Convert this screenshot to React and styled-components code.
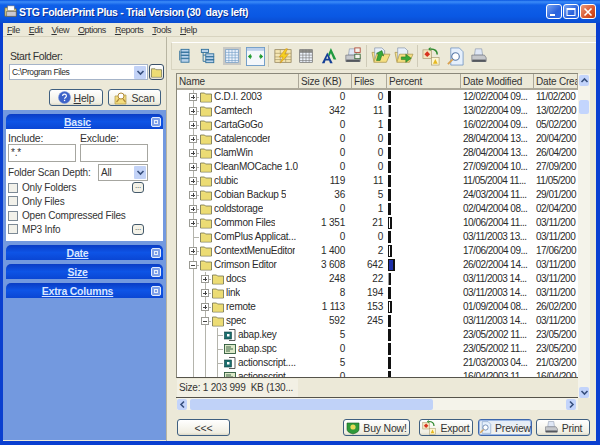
import React from 'react'
import styled, { createGlobalStyle } from 'styled-components'

const FONT = '"Liberation Sans", Arial, sans-serif'

const GlobalStyle = createGlobalStyle`
  html, body {
    margin: 0;
    padding: 0;
    background: #0a3bc8;
  }
  * {
    box-sizing: border-box;
  }
`

// Window frame ---------------------------------------------------
const Win = styled.div`
  width: 600px;
  height: 445px;
  display: flex;
  flex-direction: column;
  overflow: hidden;
  font-family: ${FONT};
  font-size: 10px;
  letter-spacing: -0.2px;
  color: #2a2a2a;
  background: #0a3fd0;
`
const TitleBar = styled.div`
  height: 23px;
  flex: none;
  display: flex;
  align-items: center;
  padding: 0 4px 0 3px;
  background: linear-gradient(180deg, #0a56e0 0%, #3c8cf8 8%, #0f5fe8 22%, #0a58e4 70%, #0a4cd0 100%);
`
const TitleText = styled.div`
  flex: 1;
  margin-left: 1px;
  color: #fff;
  font-size: 10.5px;
  font-weight: 700;
  letter-spacing: -0.35px;
  white-space: pre;
  text-shadow: 1px 1px 0 #0a2f90;
`
const TitleBtn = styled.div`
  width: 16px;
  height: 15px;
  margin-left: 1px;
  border: 1px solid #fff;
  border-radius: 3px;
  display: flex;
  align-items: center;
  justify-content: center;
  background: ${(p) =>
    p.$close
      ? 'linear-gradient(135deg, #eb9a7c, #d9542a 60%, #c23a10)'
      : 'linear-gradient(135deg, #7aa4f0, #2a62dc 60%, #2f6ae6)'};
`
const Frame = styled.div`
  flex: 1;
  min-height: 0;
  margin: 0 4px 4px 3px;
  display: flex;
  flex-direction: column;
  background: #ece9d8;
`
const MenuBar = styled.div`
  height: 14px;
  flex: none;
  display: flex;
  align-items: center;
  gap: 9px;
  padding: 0 4px;
  font-size: 9px;
  letter-spacing: -0.45px;
  color: #333;
  border-bottom: 1px solid #d8d4c0;
`
const Hotkey = styled.span`
  display: inline-block;
  &::first-letter {
    text-decoration: underline;
  }
`
const Main = styled.div`
  flex: 1;
  min-height: 0;
  display: flex;
`

// Left side ------------------------------------------------------
const LeftSide = styled.div`
  width: 164px;
  flex: none;
  display: flex;
  flex-direction: column;
  border-right: 1px solid #b8b5a2;
`
const StartArea = styled.div`
  height: 73px;
  flex: none;
  padding: 12px 2px 0 6px;
`
const StartLabel = styled.div`
  height: 15px;
  margin-left: 1px;
  line-height: 14px;
  font-size: 10.5px;
  letter-spacing: -0.4px;
  color: #333;
`
const FieldLabel = styled.div`
  height: 12px;
  line-height: 12px;
  font-size: 10.5px;
  color: #333;
`
const ComboRow = styled.div`
  display: flex;
  gap: 1px;
  height: 16px;
`
const Combo = styled.div`
  width: 141px;
  display: flex;
  align-items: center;
  justify-content: space-between;
  padding: 0 1px 0 2px;
  background: #fff;
  border: 1px solid #a6b4c8;
  font-size: 8.5px;
  letter-spacing: -0.4px;
`
const DropBtn = styled.div`
  width: 12px;
  height: 13px;
  border-radius: 1px;
  display: flex;
  align-items: center;
  justify-content: center;
  background: #c3d3f7;
`
const IconBtn = styled.div`
  width: 15px;
  height: 16px;
  border: 1px solid #39506a;
  border-radius: 3px;
  display: flex;
  align-items: center;
  justify-content: center;
  background: linear-gradient(180deg, #fff, #e8e4d4);
`
const ActionRow = styled.div`
  display: flex;
  gap: 5px;
  margin: 9px 0 0 40px;
`
const PushBtn = styled.div`
  width: ${(p) => p.$w}px;
  height: 17px;
  margin-left: ${(p) => p.$ml || 0}px;
  border: 1px solid ${(p) => (p.$active ? '#3d67ab' : '#3f5f80')};
  border-radius: 3px;
  display: flex;
  align-items: center;
  justify-content: center;
  gap: 3px;
  font-size: 10.5px;
  color: #333;
  white-space: nowrap;
  background: ${(p) =>
    p.$active ? 'linear-gradient(180deg, #e4ecf8, #f4f4ee)' : 'linear-gradient(180deg, #fff, #f0eee2 85%, #dcd8c6)'};
  box-shadow: ${(p) => (p.$active ? 'inset 0 0 0 1px #9db8e4' : 'none')};
`
const PanelStack = styled.div`
  flex: 1;
  padding: 4px 3px 0;
  margin-bottom: 1px;
  background: #7399df;
`
const GroupHead = styled.div`
  height: 15px;
  margin-top: ${(p) => (p.$first ? 0 : 4)}px;
  position: relative;
  border-radius: 5px 5px 0 0;
  display: flex;
  align-items: center;
  justify-content: center;
  padding-right: 14px;
  background: linear-gradient(180deg, #0a3cc4, #0e54e6 50%, #0a46d4);
  color: #d8e6ff;
  font-size: 10.5px;
  font-weight: 700;
  text-decoration: underline;
`
const Collapse = styled.span`
  position: absolute;
  right: 2px;
  top: 3px;
  width: 10px;
  height: 10px;
  border: 1px solid #e4ecfc;
  border-radius: 2px;
  background: #7d9fe8;
  &::after {
    content: '';
    position: absolute;
    left: 2px;
    right: 2px;
    top: 2px;
    bottom: 2px;
    border: 1px solid #e8effc;
  }
`
const GroupBody = styled.div`
  height: 112px;
  padding: 3px 3px 0 2px;
  background: #fff;
  font-size: 10px;
  color: #333;
`
const TwoFields = styled.div`
  display: grid;
  grid-template-columns: 68px 68px;
  column-gap: 4px;
`
const TextBox = styled.div`
  height: 18px;
  padding: 1px 2px;
  border: 1px solid #a6a6a0;
  font-size: 10px;
  line-height: 13px;
`
const DepthRow = styled.div`
  display: flex;
  align-items: center;
  justify-content: space-between;
  width: 140px;
  height: 18px;
  margin-top: 1px;
  white-space: nowrap;
`
const Select = styled.div`
  width: 50px;
  height: 17px;
  display: flex;
  align-items: center;
  justify-content: space-between;
  padding: 0 1px 0 2px;
  border: 1px solid #a6a6a0;
`
const CheckRow = styled.div`
  display: flex;
  align-items: center;
  gap: 4px;
  height: 13.5px;
  margin-top: ${(p) => p.$top || 0}px;
  position: relative;
  width: 136px;
  white-space: nowrap;
`
const CheckBox = styled.span`
  width: 10px;
  height: 10px;
  flex: none;
  border: 1px solid #7d8a96;
  background: #f2f1ea;
`
const Ellipsis = styled.span`
  position: absolute;
  right: 0;
  top: 1px;
  width: 12px;
  height: 11px;
  border: 1px solid #445a6c;
  border-radius: 3px;
  background: #f4f2e8;
  font-size: 8px;
  line-height: 5px;
  text-align: center;
`

// Right side -----------------------------------------------------
const Splitter = styled.div`
  width: 4px;
  flex: none;
`
const RightSide = styled.div`
  flex: 1;
  min-width: 0;
  display: flex;
  flex-direction: column;
  padding-top: 5px;
`
const Toolbar = styled.div`
  height: 28px;
  flex: none;
  display: flex;
  align-items: center;
  padding-left: 1px;
  border-top: 1px solid #fff;
  border-bottom: 1px solid #d8d4c0;
  border-left: 1px solid #d8d4c0;
`
const Tool = styled.span`
  width: 23.5px;
  height: 22px;
  flex: none;
  display: flex;
  align-items: center;
  justify-content: center;
`
const ToolSep = styled.span`
  width: 1px;
  height: 22px;
  margin: 0 2px 0 1px;
  flex: none;
  background: #cfcbb8;
`
const TableArea = styled.div`
  height: 337px;
  flex: none;
  margin: 3px 6px 0 5px;
  display: flex;
`
const TableCol = styled.div`
  width: 402px;
  flex: none;
  display: flex;
  flex-direction: column;
`
const List = styled.div`
  height: 305px;
  flex: none;
  overflow: hidden;
  background: #fff;
  border-top: 1px solid #8a887a;
  border-left: 1px solid #8a887a;
  border-bottom: 1px solid #55534a;
`
const Columns = styled.div`
  display: grid;
  grid-template-columns: 122px 53px 35px 74px 73px 44px;
  height: ${(p) => (p.$head ? 16 : 14)}px;
  line-height: ${(p) => (p.$head ? 15 : 14)}px;
  ${(p) => (p.$head ? 'background: #ece9d8; border-bottom: 2px solid #aca899;' : '')}
  white-space: nowrap;
`
const HeadCell = styled.div`
  padding-left: 2px;
  overflow: hidden;
  border-right: 1px solid #aca899;
  font-size: 10px;
  color: #333;
`
const NameCell = styled.div`
  display: flex;
  align-items: stretch;
  padding-left: 10px;
  overflow: hidden;
  letter-spacing: -0.25px;
`
const NumCell = styled.div`
  text-align: right;
  padding-right: ${(p) => p.$pad}px;
`
const TextCell = styled.div`
  padding-left: 2px;
  overflow: hidden;
  font-size: 10px;
  letter-spacing: -0.5px;
`
const PercentCell = styled.div`
  padding: 1px 0 1px 1px;
  display: flex;
`
const Guide = styled.span`
  width: 12px;
  flex: none;
  background: linear-gradient(#b4b4ac, #b4b4ac) 5.5px 0 / 1px 100% no-repeat;
`
const Branch = styled.span`
  width: 12px;
  flex: none;
  position: relative;
  background:
    linear-gradient(#b4b4ac, #b4b4ac) 5.5px 0 / 1px 100% no-repeat,
    linear-gradient(#b4b4ac, #b4b4ac) 6px 7px / 7px 1px no-repeat;
`
const Expander = styled.span`
  position: absolute;
  left: 2px;
  top: 3px;
  width: 8px;
  height: 8px;
  border: 1px solid #9a9a94;
  background: #fff;
  &::before {
    content: '';
    position: absolute;
    left: 1px;
    right: 1px;
    top: 2.5px;
    height: 1px;
    background: #444;
  }
  ${(p) =>
    p.$open
      ? ''
      : `&::after {
    content: '';
    position: absolute;
    top: 1px;
    bottom: 1px;
    left: 2.5px;
    width: 1px;
    background: #444;
  }`}
`
const NodeIcon = styled.span`
  width: 12px;
  margin: 0 2px 0 1px;
  flex: none;
  display: flex;
  align-items: center;
`
const NodeName = styled.span`
  overflow: hidden;
`
const Bar = styled.span`
  display: block;
  height: 12px;
  border-right: 2px solid #111;
  border-top: ${(p) => (p.$w > 3 ? '1px solid #111' : 'none')};
  border-bottom: ${(p) => (p.$w > 3 ? '1px solid #111' : 'none')};
  border-left: 1px solid ${(p) => (p.$w > 1 ? '#111' : '#999')};
  background: ${(p) => (p.$w > 5 ? '#1d2fa8' : '#fff')};
`
const StatusBar = styled.div`
  height: 20px;
  flex: none;
  padding: 1px 0 0 1px;
  display: flex;
  align-items: center;
  border-bottom: 1px solid #55534a;
`
const StatusCell = styled.div`
  width: 121px;
  height: 18px;
  line-height: 18px;
  padding-left: 2px;
  background: #f2f0e4;
  white-space: pre;
  font-size: 10px;
  color: #333;
`
const HScroll = styled.div`
  height: 12px;
  flex: none;
  margin-left: 1px;
  padding-right: 2px;
  display: flex;
  align-items: center;
  background: #f4f3ea;
`
const ScrollBtn = styled.div`
  width: 10px;
  height: 11px;
  flex: none;
  border-radius: 2px;
  display: flex;
  align-items: center;
  justify-content: center;
  background: #c3d4fb;
`
const HThumb = styled.div`
  width: 243px;
  height: 11px;
  margin-left: 3px;
  flex: none;
  border-radius: 2px;
  background: #c0d2f8;
`
const VScroll = styled.div`
  width: 12px;
  height: 324px;
  flex: none;
  margin-top: 1px;
  padding: 1px 0 0 1px;
  display: flex;
  flex-direction: column;
  background: #f4f3ea;
`
const VThumb = styled.div`
  width: 10px;
  height: 14px;
  margin-top: 14px;
  flex: none;
  border-radius: 2px;
  background: #c3d5fd;
`
const BottomBar = styled.div`
  flex: 1;
  display: flex;
  padding: 9px 6px 0 6px;
`
const Spacer = styled.div`
  flex: 1;
`

const Chevron = ({ dir = 'down', color = '#38507e' }) => {
  const pts = {
    down: '1.5,3 4.5,6 7.5,3',
    up: '1.5,6 4.5,3 7.5,6',
    left: '6,1.5 3,4.5 6,7.5',
    right: '3,1.5 6,4.5 3,7.5',
  }
  return (
    <svg width="9" height="9" viewBox="0 0 9 9">
      <polyline points={pts[dir]} fill="none" stroke={color} strokeWidth="1.6" />
    </svg>
  )
}

// Icons ----------------------------------------------------------
const AppIcon = () => (
  <svg width="15" height="15" viewBox="0 0 16 16">
    <path d="M2 4h5l1 1h6v8H2z" fill="#e9d98a" stroke="#6a5f30" strokeWidth=".7" />
    <rect x="5" y="2" width="7" height="5" fill="#fff" stroke="#777" strokeWidth=".6" />
    <rect x="4" y="8" width="10" height="5" fill="#c9c9d2" stroke="#555" strokeWidth=".6" />
  </svg>
)
const Folder = ({ size = 12 }) => (
  <svg width={size} height={size} viewBox="0 0 12 12">
    <path d="M.5 3V2h4l1 1h6v8H.5z" fill="#f0e07c" stroke="#6e6e4a" strokeWidth=".8" />
    <rect x="1" y="4" width="10" height="6.5" fill="#ecdc74" />
  </svg>
)
const KeyFile = () => (
  <svg width="12" height="12" viewBox="0 0 12 12">
    <path d="M5 .5h6v11H5" fill="#fff" stroke="#333" strokeWidth=".8" />
    <rect x=".5" y="3" width="7" height="7" fill="#1c6e6e" stroke="#0d3f3f" strokeWidth=".6" />
    <rect x="3" y="5" width="2.5" height="2.5" fill="#fff" />
  </svg>
)
const SpcFile = () => (
  <svg width="12" height="12" viewBox="0 0 12 12">
    <rect x=".5" y="1.5" width="11" height="9" fill="#dce8c8" stroke="#2d5a3a" strokeWidth=".9" />
    <path d="M2 4h5M2 6h7M2 8h4" stroke="#2d5a3a" strokeWidth=".9" />
  </svg>
)
const TreeIcon = ({ offset }) => (
  <svg width="16" height="16" viewBox="0 0 18 18" fill="#b9d2ea" stroke="#2f6f9c" strokeWidth="1">
    {offset ? (
      <>
        <rect x="1.5" y="1.5" width="8" height="3.5" />
        <rect x="6.5" y="6.5" width="9" height="3" />
        <rect x="6.5" y="10" width="9" height="3" />
        <rect x="6.5" y="13.5" width="9" height="3" />
        <path d="M3.5 5v10h3M3.5 8h3" fill="none" />
      </>
    ) : (
      <>
        <rect x="4.5" y="1.5" width="9" height="3" />
        <rect x="4.5" y="5" width="9" height="3" />
        <rect x="4.5" y="8.5" width="9" height="3" />
        <rect x="4.5" y="12" width="9" height="4" />
        <path d="M3 3v11" fill="none" />
      </>
    )}
  </svg>
)
const GridIcon = ({ dark }) => (
  <svg width="18" height="18" viewBox="0 0 20 20">
    {!dark && <rect x="0" y="0" width="20" height="20" fill="#c8c8c4" />}
    <rect x="3" y="3" width="14" height="14" fill="#eef4fc" stroke={dark ? '#666' : '#6f9cc8'} strokeWidth=".8" />
    {dark && <rect x="3" y="3" width="14" height="3" fill="#8d8d88" />}
    <path d="M3 6h14M3 9h14M3 12h14M3 15h14M6.5 3v14M10 3v14M13.5 3v14" stroke={dark ? '#777' : '#6f9cc8'} strokeWidth=".7" />
  </svg>
)
const FitIcon = () => (
  <svg width="19" height="19" viewBox="0 0 20 20">
    <rect x=".5" y=".5" width="19" height="19" fill="#f4f7fb" stroke="#6f9cc8" />
    <rect x="1" y="1" width="18" height="3" fill="#bcd0ea" />
    <path d="M2 10l3-3v2h1v2H5v2zM18 10l-3-3v2h-1v2h1v2z" fill="#1d9a2d" />
  </svg>
)
const ColorGridIcon = () => (
  <svg width="18" height="18" viewBox="0 0 20 20">
    <rect x="1" y="3" width="18" height="14" fill="#f6e7b4" stroke="#8a7a50" strokeWidth=".8" />
    <path d="M1 7h18M1 11h18M1 14h18M7 3v14M13 3v14" stroke="#a08f5c" strokeWidth=".7" />
    <path d="M13 2L6 11h4l-3 7 9-10h-4l3-6z" fill="#f4d020" stroke="#d08a10" strokeWidth=".6" />
  </svg>
)
const FontIcon = () => (
  <svg width="18" height="18" viewBox="0 0 20 20">
    <path d="M11 1l6 13h-3l-3-7-2 4-1-3z" fill="#1f9a40" />
    <path d="M7 6l6 12h-3l-1-3H5l-1 3H1z" fill="#143f96" />
    <path d="M7 10l-1.2 3h2.4z" fill="#ece9d8" />
  </svg>
)
const PrinterIcon = ({ check, size = 18 }) => (
  <svg width={size} height={size} viewBox="0 0 20 20">
    <path d="M6 2h7l1 7H5z" fill="#dfe7f6" stroke="#8894a8" strokeWidth=".7" />
    <path d="M2 9h14l2 3v4H2z" fill="#c6c8cc" stroke="#6a6e76" strokeWidth=".7" />
    <rect x="2.5" y="14" width="15" height="2.5" fill="#55585e" />
    {check && <rect x="12" y="1" width="6" height="5" fill="#f4f4ee" stroke="#b04a3a" />}
    {check && <rect x="12" y="8" width="6" height="5" fill="#f4f4ee" stroke="#3c6a3a" />}
  </svg>
)
const OpenIcon = ({ right }) => (
  <svg width="20" height="18" viewBox="0 0 22 20">
    <path d="M1 6h6l1-2h7v12H3z" fill="#f6e290" stroke="#a8944a" strokeWidth=".8" />
    <path d="M4 1h8l3 3v9H4z" fill="#e8f0fa" stroke="#7a8ca8" strokeWidth=".7" />
    <path d="M3 17l3-9h15l-4 9z" fill="#f6df80" stroke="#a8944a" strokeWidth=".8" />
    {right ? (
      <path d="M8 11h5V8l6 4.5-6 4.5v-3H8z" fill="#38a838" stroke="#1d6e1d" strokeWidth=".6" />
    ) : (
      <path d="M6 15l2-7-2-1 6-3 2 6-2-1-2 6z" fill="#38a838" stroke="#1d6e1d" strokeWidth=".6" />
    )}
  </svg>
)
const ExportIcon = ({ size = 19 }) => (
  <svg width={size} height={size} viewBox="0 0 20 20">
    <rect x="1" y="3" width="9" height="9" fill="#f3e5c0" stroke="#a89a70" strokeWidth=".7" />
    <path d="M5.5 4.5l3 3-3 3-3-3z" fill="#d8321e" />
    <path d="M9 2c5 0 7 3 7 6" fill="none" stroke="#2f8a2f" strokeWidth="1.6" />
    <path d="M9 0v4.5L6.5 2z" fill="#2f8a2f" />
    <rect x="10" y="11" width="8" height="8" fill="#fdf6d0" stroke="#a89a70" strokeWidth=".7" />
    <path d="M14 12.5l2.5 5h-5z" fill="#e6b820" />
  </svg>
)
const PreviewIcon = ({ size = 19 }) => (
  <svg width={size} height={size} viewBox="0 0 20 20">
    <path d="M5 1h9l4 4v14H5z" fill="#e6f0fc" stroke="#6a8fc0" strokeWidth=".8" />
    <circle cx="10" cy="10" r="4" fill="#fff" stroke="#5a7aa8" strokeWidth="1.2" />
    <path d="M7 13l-5 5" stroke="#d8a050" strokeWidth="2" />
  </svg>
)
const HelpIcon = () => (
  <svg width="13" height="13" viewBox="0 0 13 13">
    <circle cx="6.5" cy="6.5" r="6" fill="#3d63c8" stroke="#7d97dc" strokeWidth=".6" />
    <path d="M4.6 5c0-2.4 3.8-2.4 3.8 0 0 1.4-1.9 1.4-1.9 2.8" fill="none" stroke="#fff" strokeWidth="1.2" />
    <rect x="5.9" y="8.8" width="1.3" height="1.3" fill="#fff" />
  </svg>
)
const ScanIcon = () => (
  <svg width="14" height="14" viewBox="0 0 14 14">
    <path d="M1 5h4l1-1h6v9H1z" fill="#f3dc7c" stroke="#b09a4a" strokeWidth=".7" />
    <circle cx="7" cy="5" r="3" fill="#fff" stroke="#b08a3a" />
    <path d="M5 8L2.5 11M9 8l2.5 3" stroke="#b08a3a" strokeWidth="1.2" />
  </svg>
)
const BuyIcon = () => (
  <svg width="14" height="14" viewBox="0 0 14 14">
    <path d="M1 2h12v6c0 3-3 4-6 5-3-1-6-2-6-5z" fill="#2f9a3a" stroke="#1a5e22" strokeWidth=".6" />
    <circle cx="7" cy="6" r="2.6" fill="#e8d85a" />
  </svg>
)

// Data -----------------------------------------------------------
const rows = [
  ['C.D.I. 2003', '0', '0', 3, '12/02/2004 09...', '11/02/200', 0, 'plus'],
  ['Camtech', '342', '11', 1, '13/02/2004 09...', '13/02/200', 0, 'plus'],
  ['CartaGoGo', '0', '1', 2, '16/02/2004 09...', '05/02/200', 0, 'plus'],
  ['Catalencoder', '0', '0', 2, '28/04/2004 13...', '20/04/200', 0, 'plus'],
  ['ClamWin', '0', '0', 2, '28/04/2004 13...', '26/04/200', 0, 'plus'],
  ['CleanMOCache 1.0', '0', '0', 2, '27/09/2004 10...', '27/09/200', 0, 'plus'],
  ['clubic', '119', '11', 3, '11/05/2004 11...', '11/05/200', 0, 'plus'],
  ['Cobian Backup 5', '36', '5', 2, '24/03/2004 11...', '29/01/200', 0, 'plus'],
  ['coldstorage', '0', '1', 2, '02/04/2004 08...', '02/04/200', 0, 'plus'],
  ['Common Files', '1 351', '21', 4, '10/06/2004 11...', '03/11/200', 0, 'plus'],
  ['ComPlus Applicat...', '0', '0', 2, '03/11/2003 13...', '03/11/200', 0, 'none'],
  ['ContextMenuEditor', '1 400', '2', 4, '17/06/2004 09...', '17/06/200', 0, 'plus'],
  ['Crimson Editor', '3 608', '642', 7, '26/02/2004 14...', '03/11/200', 0, 'minus'],
  ['docs', '248', '22', 1, '03/11/2003 14...', '03/11/200', 1, 'plus'],
  ['link', '8', '194', 2, '03/11/2003 14...', '03/11/200', 1, 'plus'],
  ['remote', '1 113', '153', 4, '01/09/2004 08...', '26/02/200', 1, 'plus'],
  ['spec', '592', '245', 3, '03/11/2003 14...', '03/11/200', 1, 'minus'],
  ['abap.key', '5', '', 2, '23/05/2002 11...', '23/05/200', 2, 'key'],
  ['abap.spc', '0', '', 2, '23/05/2002 11...', '23/05/200', 2, 'spc'],
  ['actionscript....', '5', '', 2, '21/03/2003 04...', '21/03/200', 2, 'key'],
  ['actionscript', '0', '', 2, '16/04/2003 11...', '16/04/200', 2, 'spc'],
]

function TreeRow({ row }) {
  const [name, size, files, bar, modified, created, level, kind] = row
  const isFile = kind === 'key' || kind === 'spc'
  return (
    <Columns>
      <NameCell>
        {Array.from({ length: level }).map((_, i) => (
          <Guide key={i} />
        ))}
        <Branch>{(kind === 'plus' || kind === 'minus') && <Expander $open={kind === 'minus'} />}</Branch>
        <NodeIcon>
          {!isFile && <Folder />}
          {kind === 'key' && <KeyFile />}
          {kind === 'spc' && <SpcFile />}
        </NodeIcon>
        <NodeName>{name}</NodeName>
      </NameCell>
      <NumCell $pad={7}>{size}</NumCell>
      <NumCell $pad={4}>{files}</NumCell>
      <PercentCell>
        <Bar $w={bar} style={{ width: bar }} />
      </PercentCell>
      <TextCell>{modified}</TextCell>
      <TextCell>{created}</TextCell>
    </Columns>
  )
}

export default function App() {
  return (
    <Win>
      <GlobalStyle />
      <TitleBar>
        <AppIcon />
        <TitleText>STG FolderPrint Plus - Trial Version (30  days left)</TitleText>
        <TitleBtn>
          <svg width="10" height="10" viewBox="0 0 10 10">
            <rect x="1" y="7" width="5" height="2" fill="#fff" />
          </svg>
        </TitleBtn>
        <TitleBtn>
          <svg width="10" height="10" viewBox="0 0 10 10">
            <rect x="1" y="1.5" width="8" height="7" fill="none" stroke="#fff" />
            <rect x="1" y="1" width="8" height="2" fill="#fff" />
          </svg>
        </TitleBtn>
        <TitleBtn $close>
          <svg width="10" height="10" viewBox="0 0 10 10">
            <path d="M1.5 1.5l7 7M8.5 1.5l-7 7" stroke="#fff" strokeWidth="1.6" />
          </svg>
        </TitleBtn>
      </TitleBar>
      <Frame>
        <MenuBar>
          {['File', 'Edit', 'View', 'Options', 'Reports', 'Tools', 'Help'].map((m) => (
            <Hotkey key={m}>{m}</Hotkey>
          ))}
        </MenuBar>
        <Main>
          <LeftSide>
            <StartArea>
              <StartLabel>Start Folder:</StartLabel>
              <ComboRow>
                <Combo>
                  C:\Program Files
                  <DropBtn>
                    <Chevron />
                  </DropBtn>
                </Combo>
                <IconBtn>
                  <Folder size={11} />
                </IconBtn>
              </ComboRow>
              <ActionRow>
                <PushBtn $w={54}>
                  <HelpIcon />
                  <Hotkey>Help</Hotkey>
                </PushBtn>
                <PushBtn $w={53}>
                  <ScanIcon />
                  Scan
                </PushBtn>
              </ActionRow>
            </StartArea>
            <PanelStack>
              <GroupHead $first>
                Basic
                <Collapse />
              </GroupHead>
              <GroupBody>
                <TwoFields>
                  <FieldLabel>Include:</FieldLabel>
                  <FieldLabel>Exclude:</FieldLabel>
                  <TextBox>*.*</TextBox>
                  <TextBox />
                </TwoFields>
                <DepthRow>
                  Folder Scan Depth:
                  <Select>
                    All
                    <DropBtn>
                      <Chevron />
                    </DropBtn>
                  </Select>
                </DepthRow>
                <CheckRow>
                  <CheckBox />
                  Only Folders
                  <Ellipsis>...</Ellipsis>
                </CheckRow>
                <CheckRow>
                  <CheckBox />
                  Only Files
                </CheckRow>
                <CheckRow $top={1}>
                  <CheckBox />
                  Open Compressed Files
                </CheckRow>
                <CheckRow>
                  <CheckBox />
                  MP3 Info
                  <Ellipsis>...</Ellipsis>
                </CheckRow>
              </GroupBody>
              <GroupHead>
                Date
                <Collapse />
              </GroupHead>
              <GroupHead>
                Size
                <Collapse />
              </GroupHead>
              <GroupHead>
                Extra Columns
                <Collapse />
              </GroupHead>
            </PanelStack>
          </LeftSide>
          <Splitter />
          <RightSide>
            <Toolbar>
              <Tool><TreeIcon /></Tool>
              <Tool><TreeIcon offset /></Tool>
              <Tool><GridIcon /></Tool>
              <Tool><FitIcon /></Tool>
              <ToolSep />
              <Tool><ColorGridIcon /></Tool>
              <Tool><GridIcon dark /></Tool>
              <Tool><FontIcon /></Tool>
              <Tool><PrinterIcon check /></Tool>
              <ToolSep />
              <Tool><OpenIcon /></Tool>
              <Tool><OpenIcon right /></Tool>
              <ToolSep />
              <Tool><ExportIcon /></Tool>
              <Tool><PreviewIcon /></Tool>
              <Tool><PrinterIcon /></Tool>
            </Toolbar>
            <TableArea>
              <TableCol>
                <List>
                  <Columns $head>
                    <HeadCell>Name</HeadCell>
                    <HeadCell>Size (KB)</HeadCell>
                    <HeadCell>Files</HeadCell>
                    <HeadCell>Percent</HeadCell>
                    <HeadCell>Date Modified</HeadCell>
                    <HeadCell>Date Crea</HeadCell>
                  </Columns>
                  {rows.map((r) => (
                    <TreeRow key={r[0] + r[6] + r[4]} row={r} />
                  ))}
                </List>
                <StatusBar>
                  <StatusCell>Size: 1 203 999  KB (130...</StatusCell>
                </StatusBar>
                <HScroll>
                  <ScrollBtn>
                    <Chevron dir="left" />
                  </ScrollBtn>
                  <HThumb />
                  <Spacer />
                  <ScrollBtn>
                    <Chevron dir="right" />
                  </ScrollBtn>
                </HScroll>
              </TableCol>
              <VScroll>
                <ScrollBtn>
                  <Chevron dir="up" />
                </ScrollBtn>
                <VThumb />
                <Spacer />
                <ScrollBtn>
                  <Chevron />
                </ScrollBtn>
              </VScroll>
            </TableArea>
            <BottomBar>
              <PushBtn $w={53}>&lt;&lt;&lt;</PushBtn>
              <Spacer />
              <PushBtn $w={67}>
                <BuyIcon />
                Buy Now!
              </PushBtn>
              <PushBtn $w={54} $ml={9}>
                <ExportIcon size={15} />
                Export
              </PushBtn>
              <PushBtn $w={54} $ml={5} $active>
                <PreviewIcon size={15} />
                Preview
              </PushBtn>
              <PushBtn $w={54} $ml={4}>
                <PrinterIcon size={15} />
                Print
              </PushBtn>
            </BottomBar>
          </RightSide>
        </Main>
      </Frame>
    </Win>
  )
}
